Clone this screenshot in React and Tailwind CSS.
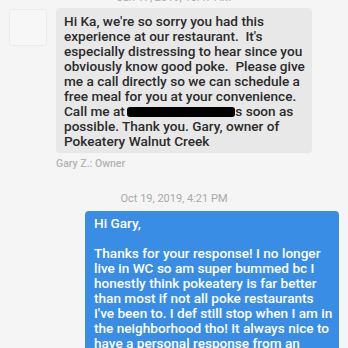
import React from "react";

const grayLines = [
  "Hi Ka, we're so sorry you had this",
  "experience at our restaurant.  It's",
  "especially distressing to hear since you",
  "obviously know good poke.  Please give",
  "me a call directly so we can schedule a",
  "free meal for you at your convenience.",
];

const blueLines = [
  "Thanks for your response! I no longer",
  "live in WC so am super bummed bc I",
  "honestly think pokeatery is far better",
  "than most if not all poke restaurants",
  "I've been to. I def still stop when I am in",
  "the neighborhood tho! It always nice to",
  "have a personal response from an",
];

export default function App() {
  const font = { fontFamily: "Roboto, 'Liberation Sans', sans-serif" };
  return (
    <div className="w-[348px] h-[348px] overflow-hidden bg-[#f5f5f5]" style={font}>
      <div className="-mt-[9px] h-[14px] text-center text-[11px] leading-[14px] text-[#ababab]">
        Jun 17, 2019, 10:47 AM
      </div>
      <div className="flex items-start pl-[9px] mt-[3px]">
        <div className="w-[38px] h-[37px] mt-[1px] rounded-[3px] border border-[#ececec] bg-[#f7f7f7]" />
        <div className="ml-[9px] w-[256px] rounded-[4px] bg-[#e8e8e8] pl-[8px] pt-[6px] pb-[4px] text-[13.6px] leading-[15px] font-medium text-[#2b2b2b]">
          {grayLines.map((l, i) => (
            <div key={i} className="whitespace-pre">{l}</div>
          ))}
          <div className="whitespace-pre">
            Call me at{" "}
            <span className="inline-block align-middle w-[108px] h-[10px] bg-black rounded-[3px] -ml-[1px]" />
            s soon as
          </div>
          <div className="whitespace-pre">possible. Thank you. Gary, owner of</div>
          <div className="whitespace-pre">Pokeatery Walnut Creek</div>
        </div>
      </div>
      <div className="pl-[56px] mt-[5px] text-[10.5px] leading-[12px] font-medium text-[#b3b3b3]">Gary Z.: Owner</div>
      <div className="mt-[22px] text-center text-[11px] leading-[14px] text-[#a9a9a9]">Oct 19, 2019, 4:21 PM</div>
      <div className="ml-[85px] mt-[5px] w-[254px] rounded-[4px] bg-[#3a8de4] pl-[9px] pt-[5px] pb-[8px] text-[13.6px] leading-[15px] font-medium text-white">
        <div className="whitespace-pre">Hi Gary,</div>
        <div className="h-[15px]" />
        {blueLines.map((l, i) => (
          <div key={i} className="whitespace-pre">{l}</div>
        ))}
      </div>
    </div>
  );
}
